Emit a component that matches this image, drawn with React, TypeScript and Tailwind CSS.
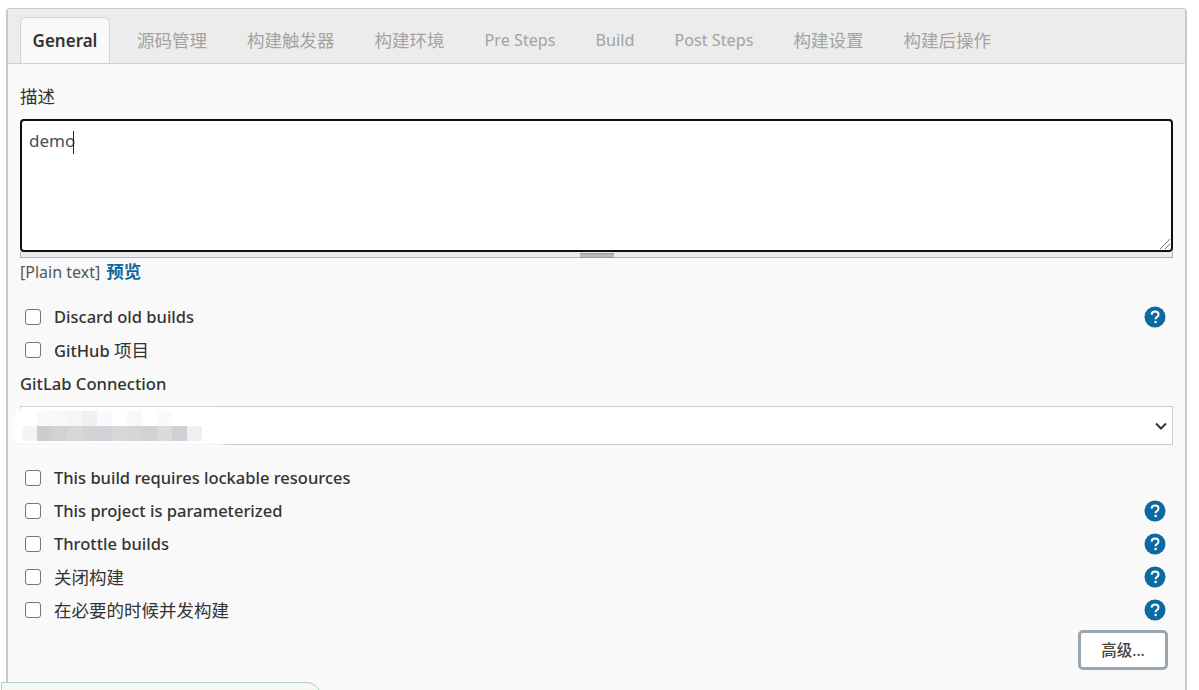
const font = { fontFamily: '"Noto Sans", "Noto Sans CJK SC", sans-serif' };

const tabs: [string, boolean][] = [["源码管理", true], ["构建触发器", true], ["构建环境", true], ["Pre Steps", false], ["Build", false], ["Post Steps", false], ["构建设置", true], ["构建后操作", true]];
const row1 = ["#ffffff", "#f9f9f9", "#f8f8f6", "#f6f6f6", "#f1f0ee", "#f9fafc", "#ffffff", "#f8f8f8", "#ffffff", "#f9fbfa"];
const row2 = ["#f6f5f3", "#cdcdcd", "#d1d3d3", "#d7d7d7", "#d6d3d2", "#d0d2d7", "#d9d7d7", "#d6d5d6", "#d2d2d6", "#dcdbd8", "#cfd0d5", "#efefef"];

function Help() {
  return (
    <svg width="22" height="22" viewBox="0 0 22 22" className="mb-[2px] mr-[7px] shrink-0">
      <circle cx="11" cy="11" r="10.5" fill="#0b6aa2" />
      <path d="M7.6 8.6c.1-2 1.5-3.1 3.5-3.1 2 0 3.4 1.1 3.4 2.9 0 1.3-.7 2-1.7 2.7-.9.6-1.2 1-1.2 1.9v.3" fill="none" stroke="#fff" strokeWidth="2" />
      <circle cx="11.6" cy="16" r="1.3" fill="#fff" />
    </svg>
  );
}

function Check({ label, help, cjk }: { label: React.ReactNode; help?: boolean; cjk?: boolean }) {
  return (
    <div className="flex h-[33px] items-center">
      <span className="mb-[2px] ml-[5px] h-4 w-4 shrink-0 rounded-[3px] border border-[#767676] bg-white" />
      <span className={`ml-[13px] flex-1 text-[#333] ${cjk ? "text-[17.5px]" : "text-[16.5px] font-medium"}`}>{label}</span>
      {help && <Help />}
    </div>
  );
}

export default function App() {
  return (
    <div className="relative h-[690px] w-[1199px] overflow-hidden bg-white" style={font}>
      <div className="ml-[6px] mt-2 h-[700px] w-[1181px] rounded-t-[4px] border-2 border-b-0 border-[#c9c9c9] bg-[#f9f9f9]" style={{ borderWidth: "1px 2px 0 2px" }}>
        <div className="flex h-[55px] items-end border-b border-[#cfcfcf] bg-[#ececec] pl-3">
          <div className="flex h-[46px] w-[90px] items-center justify-center rounded-t-[6px] border border-b-0 border-[#d4d4d4] bg-[#f9f9f9] text-[17px] font-semibold text-[#333]">General</div>
          <div className="flex h-[46px] items-center gap-[40px] pl-[27px] text-[#a3a3a3]">
            {tabs.map(([t, cjk]) => (
              <span key={t} className={cjk ? "text-[17.5px]" : "text-[16.2px]"}>{t}</span>
            ))}
          </div>
        </div>
        <div className="pl-3 pr-3">
          <div className="pt-[18px] text-[17.5px] leading-[28px] text-[#333]">描述</div>
          <div className="relative mt-[9px] h-[139px]">
            <div className="relative z-10 h-[133px] rounded-[4px] border-2 border-[#0f0f0f] bg-white pl-[7px] pt-[8px] text-[17px] leading-[24px] text-[#3f4f5f]">
              <span>demo</span>
              <span className="ml-[-2px] inline-block h-[23px] w-px bg-[#222] align-middle" />
              <svg width="12" height="12" viewBox="0 0 12 12" className="absolute bottom-0 right-0">
                <path d="M1 11 11 1M6 11l5-5" stroke="#777" strokeWidth="1" />
              </svg>
            </div>
            <div className="flex h-[6px] justify-center border-x border-b border-[#a9b5bd] bg-[#e9edef]">
              <div className="mt-px h-[5px] w-[34px] border-y border-[#9c9c9c] bg-[#b9b9b9]" />
            </div>
          </div>
          <div className="leading-[26px] text-[#555]">
            <span className="text-[16px]">[Plain text]</span><span className="ml-[6px] text-[17.5px] font-bold text-[#0b6aa2]">预览</span>
          </div>
          <div className="mt-[16px]">
            <Check label="Discard old builds" help />
            <Check label={<>GitHub <span className="text-[17.5px] font-normal">项目</span></>} />
          </div>
          <div className="mt-[3px] text-[16.6px] font-medium leading-[28px] text-[#333]">GitLab Connection</div>
          <div className="relative mt-[8px] flex h-[39px] items-center justify-end border border-[#c9c9c9] bg-white pr-[4px]">
            <svg width="14" height="14" viewBox="0 0 14 14">
              <path d="M2 4.5 7 9.5 12 4.5" fill="none" stroke="#333" strokeWidth="2" />
            </svg>
            <div className="absolute left-[-8px] top-[1px] h-[38px] w-[216px] rounded-[12px] bg-white blur-[2px]" />
            <div className="absolute left-[1px] top-[4px]">
              <div className="flex">
                {row1.map((c, i) => <div key={i} className="h-[15px] w-[15px]" style={{ background: c }} />)}
              </div>
              <div className="flex">
                {row2.map((c, i) => <div key={i} className="h-[15px] w-[15px]" style={{ background: c }} />)}
              </div>
            </div>
          </div>
          <div className="mt-[17px]">
            <Check label="This build requires lockable resources" />
            <Check label="This project is parameterized" help />
            <Check label="Throttle builds" help />
            <Check label="关闭构建" help cjk />
            <Check label="在必要的时候并发构建" help cjk />
          </div>
          <div className="mt-[3px] flex justify-end pr-[5px]">
            <div className="flex h-[40px] w-[90px] items-center justify-center rounded-[5px] border-[3px] border-[#9aa5ae] bg-white pt-px text-[15.5px] font-medium text-[#444]">高级...</div>
          </div>
        </div>
      </div>
      <div className="absolute left-[1px] top-[682px] h-[30px] w-[320px] rounded-tr-[14px] border border-[#aed2bf] bg-[#f4f8f1]" />
    </div>
  );
}
